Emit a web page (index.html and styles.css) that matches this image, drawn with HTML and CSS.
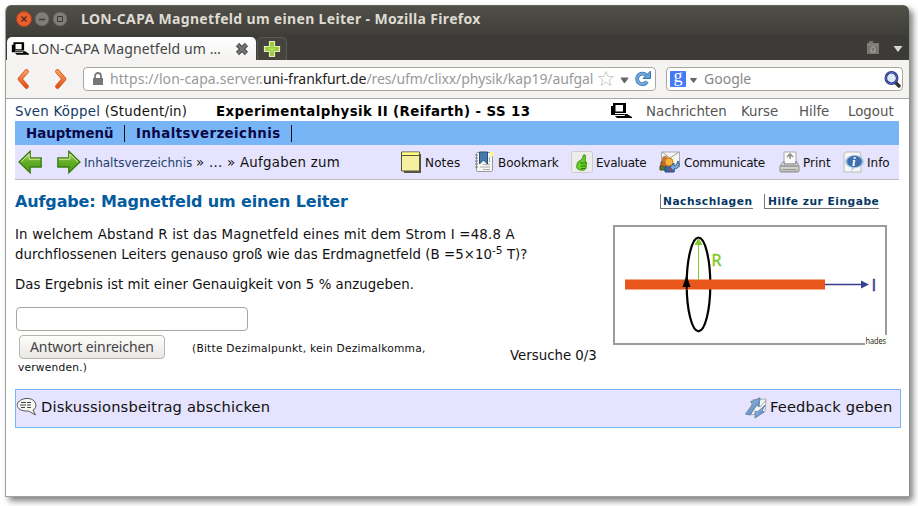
FILE: index.html
```html
<!DOCTYPE html>
<html lang="de">
<head>
<meta charset="utf-8">
<title>LON-CAPA Magnetfeld um einen Leiter</title>
<link rel="stylesheet" href="styles.css">
</head>
<body>
<svg class="defs" width="0" height="0">
  <defs>
    <linearGradient id="orange" x2="0" y2="1"><stop stop-color="#f6a164"/><stop offset="1" stop-color="#e4501b"/></linearGradient>
    <linearGradient id="green" x2="0" y2="1"><stop stop-color="#b5dc62"/><stop offset=".5" stop-color="#62ad27"/><stop offset="1" stop-color="#4b9b12"/></linearGradient>
    <linearGradient id="blue" x2="1" y2="1"><stop stop-color="#bdd5f0"/><stop offset="1" stop-color="#386fae"/></linearGradient>
    <linearGradient id="grey" x2="0" y2="1"><stop stop-color="#fff"/><stop offset="1" stop-color="#b5b7b0"/></linearGradient>
    <symbol id="logo" viewBox="0 0 22 15"><path d="M3 0h13v10H5v1h9v1H1V3h2zM5.500 2v6.500H13V2zM14 11h3l5 3v1H7l-2-2h10z" fill="#000" fill-rule="evenodd"/></symbol>
    <symbol id="arrow" viewBox="0 0 24 24"><path d="M.8 8h11V1.200L23 12 11.800 22.800V17H.8z" fill="url(#green)" stroke="#3c7d15" stroke-width="1.300"/><path d="M1.900 9.200h11V4L21 12" fill="none" stroke="#d5f0a0"/></symbol>
    <symbol id="chevron" viewBox="0 0 12 20"><path d="M2.500 2.500 9 10l-6.500 7.500" fill="none" stroke="#d5541c" stroke-width="4.500" stroke-linecap="round" stroke-linejoin="round"/><path d="M2.500 2.500 9 10l-6.500 7.500" fill="none" stroke="url(#orange)" stroke-width="3" stroke-linecap="round" stroke-linejoin="round"/></symbol>
  </defs>
</svg>
<div class="window">
  <header class="chrome">
    <div class="titlebar">
      <svg class="controls" width="54" height="18" viewBox="0 0 54 18">
        <circle cx="9" cy="9" r="7.500" fill="#e9602f" stroke="#b8421b"/><path d="m6.500 6.500 5 5m0-5-5 5" stroke="#562716" stroke-width="1.300"/>
        <circle cx="27" cy="9" r="7" fill="#807e76" stroke="#5f5d56"/><path d="M24 9.500h6" stroke="#3a3934" stroke-width="1.400"/>
        <circle cx="45" cy="9" r="7" fill="#807e76" stroke="#5f5d56"/><path d="M42.500 6.500h5v5h-5z" fill="none" stroke="#3a3934"/>
      </svg>
      <span class="wintitle">LON-CAPA Magnetfeld um einen Leiter - Mozilla Firefox</span>
    </div>
    <div class="tabs">
      <div class="tab">
        <svg width="18" height="13"><use href="#logo"/></svg>
        <span class="tabtitle">LON-CAPA Magnetfeld um …</span>
        <svg width="14" height="14" viewBox="0 0 14 14"><path d="m2.500 2.500 9 9m0-9-9 9" stroke="#555" stroke-width="4.600"/><path d="m3 3 8 8m0-8-8 8" stroke="#777" stroke-width="2"/></svg>
      </div>
      <div class="newtab"><svg width="18" height="18" viewBox="0 0 18 18"><path d="M6.500 1.500h5v5h5v5h-5v5h-5v-5h-5v-5h5z" fill="#9bca3e" stroke="#e0edb8" stroke-width="1.200"/><path d="M6 9h6M9 6v6" stroke="#b1d95b" stroke-width="2"/></svg></div>
      <svg class="tabtools" width="38" height="16" viewBox="0 0 38 16"><path d="M2 3h2V1h4v2h6v11H2z" fill="#77766f"/><path d="M2 5h12" stroke="#8f8e88"/><path d="M6 12V8.500l2-2 2 2V12z" fill="none" stroke="#aaa9a4"/><path d="M28.500 6h9L33 12z" fill="#d9d8d3"/></svg>
    </div>
    <div class="navbar">
      <svg class="flip" width="12" height="20"><use href="#chevron"/></svg>
      <svg width="12" height="20"><use href="#chevron"/></svg>
      <div class="field url">
        <svg width="12" height="14" viewBox="0 0 12 14"><path d="M3 7V4a3 3 0 0 1 6 0v3" fill="none" stroke="#777" stroke-width="1.800"/><path d="M1 6h10v7H1z" fill="#777"/></svg>
        <span class="address"><span class="a1">https://lon-capa.server.</span><b class="a2">uni-frankfurt.de</b><span class="a3">/res/ufm/clixx/physik/kap19/aufgal</span></span>
        <svg width="54" height="18" viewBox="0 0 54 18"><path d="m8 1.500 2 5h5.500l-4.300 3.500 1.700 5.500L8 12.200l-4.900 3.300L4.800 10 .5 6.500H6z" fill="#fff" stroke="#ccc"/><path d="M23 8h7l-3.500 5z" fill="#666" stroke="#666"/><path d="M49 11.500a5.300 5.300 0 1 1-1-6.500" fill="none" stroke="#3b79b5" stroke-width="3.800"/><path d="M49 11.500a5.300 5.300 0 1 1-1-6.500" fill="none" stroke="#74aadb" stroke-width="2.200"/><path d="M52.500 1v7.500H45z" fill="#62a0d6" stroke="#3b79b5"/></svg>
      </div>
      <div class="field search">
        <span class="g">g</span>
        <svg width="12" height="17" viewBox="16 0 12 17"><path d="M20.500 7.500h6l-3 4z" fill="#666" stroke="#666"/></svg>
        <span class="google">Google</span>
        <svg width="17" height="18" viewBox="0 0 17 18"><path d="m11 12 4 4" stroke="#333" stroke-width="3.400" stroke-linecap="round"/><circle cx="7.500" cy="8" r="5.700" fill="#dfe9f6" stroke="#26338a" stroke-width="2.600"/><circle cx="7.500" cy="8" r="5.700" fill="none" stroke="#7188cf" stroke-width=".7"/></svg>
      </div>
    </div>
  </header>
  <main class="page">
    <div class="userbar">
      <span class="user"><a>Sven Köppel</a> (Student/in)</span>
      <b class="course">Experimentalphysik II (Reifarth) - SS 13</b>
      <svg class="home" width="22" height="15"><use href="#logo"/></svg>
      <span class="top t1">Nachrichten</span><span class="top t2">Kurse</span><span class="top t3">Hilfe</span><span class="top t4">Logout</span>
    </div>
    <nav class="menu"><b class="m1">Hauptmenü</b><b class="m2">Inhaltsverzeichnis</b></nav>
    <div class="tools">
      <svg class="flip" width="24" height="24"><use href="#arrow"/></svg>
      <svg width="24" height="24"><use href="#arrow"/></svg>
      <a class="crumb">Inhaltsverzeichnis</a><span class="path">» ... » Aufgaben zum</span>
      <svg width="22" height="22" viewBox="0 0 22 22"><path d="M2 3h18v19H3z" fill="#55554a"/><path d="M.5 1h18v19H.5z" fill="#f5efa0" stroke="#575432"/><path d="M1 1.500h17V4H1z" fill="#ffff7d"/><path d="M.5 4.500h18" stroke="#575432"/></svg>
      <span class="act c1">Notes</span>
      <svg width="22" height="22" viewBox="0 0 22 22"><rect x="1.500" y="1.500" width="16" height="19" rx="1" fill="#f6f6f4" stroke="#999"/><path d="M0 4h3M0 7h3m-3 3h3m-3 3h3m-3 3h3" stroke="#777"/><path d="M8 13.500h7M5 16h10M8 18.500h7M14.500 6v5" stroke="#aaa"/><path d="M4.500 1h8v12l-4-4-4 4z" fill="#4778ae" stroke="#274e7d"/><path d="M15 1h4v4h-4z" fill="#fff1a0"/></svg>
      <span class="act c2">Bookmark</span>
      <svg width="22" height="22" viewBox="0 0 22 22"><rect x=".5" y=".5" width="21" height="21" rx="2" fill="#ededeb" stroke="#ccc"/><path d="M10 9c3-2 1-6 4-5 1 1 0 4 0 6 2 1 2 3 1 5 1 2-1 5-5 4-4 0-5-3-4-5 0-3 2-4 4-5z" fill="#68cf25" stroke="#348c17"/><path d="M9 12h6m-5 3h5m-5 2.500h4" stroke="#287910"/></svg>
      <span class="act c3">Evaluate</span>
      <svg width="22" height="22" viewBox="0 0 22 22"><path d="M2.500 1h18v15h-18z" fill="#f5f5f2" stroke="#aaa"/><path d="m3 1 8 6 9-6" fill="none" stroke="#999"/><path d="M1 19v-4l3-3 4 1 2 6z" fill="#577b37" stroke="#38541f"/><path d="M2 15v-4l4-3 5 4-1 5z" fill="#b66c25" stroke="#80461b"/><circle cx="6" cy="8" r="3" fill="#c47b36"/><path d="M6 21v-5l4-3 5 3v5z" fill="#3866a5" stroke="#244a80"/><circle cx="10" cy="11" r="4" fill="#f6b442" stroke="#d37a1c"/><path d="m10 15 2 6 2-5" fill="#d83434"/><path d="M19 10c3 4 0 8-4 8v3l-4-5 4-4v3q3 0 4-5z" fill="#7da9da" stroke="#27588f"/></svg>
      <span class="act c4">Communicate</span>
      <svg width="22" height="22" viewBox="0 0 22 22"><path d="M5 1h12v12H5z" fill="#fafafa" stroke="#aaa"/><path d="M11 8V3M8 6l3-3 3 3" fill="none" stroke="#8b9185" stroke-width="1.600"/><path d="m5 10-4 5v5q0 1 2 1h15q2 0 2-1v-5l-3-5v3H5z" fill="url(#grey)" stroke="#888"/><path d="M2 15h17" stroke="#666"/><path d="M4 18.500h13" stroke="#999"/></svg>
      <span class="act c5">Print</span>
      <svg width="22" height="22" viewBox="0 0 22 22"><path d="M3 1h14l1 5v15H1V3z" fill="#f7f7f5" stroke="#bbb"/><path d="m9 15-1 6 6-6z" fill="#bed5ef"/><ellipse cx="11.500" cy="10.500" rx="9.500" ry="6.500" fill="#a8c6e7"/><ellipse cx="11.500" cy="10.500" rx="7.500" ry="5.700" fill="#3f70ae"/><text class="i" x="9" y="15">i</text></svg>
      <span class="act c6">Info</span>
    </div>
    <div class="headline">
      <h1>Aufgabe: Magnetfeld um einen Leiter</h1>
      <b class="help h1b">Nachschlagen</b><b class="help h2b">Hilfe zur Eingabe</b>
    </div>
    <section class="problem">
      <div class="question">
        <p><span class="q1">In welchem Abstand R ist das Magnetfeld eines mit dem Strom I =48.8 A</span><br><span class="q2">durchflossenen Leiters genauso groß wie das Erdmagnetfeld (B =5×10<sup>-5</sup> T)?</span></p>
        <p class="q3">Das Ergebnis ist mit einer Genauigkeit von 5 % anzugeben.</p>
        <div class="input"></div>
        <div class="submit">
          <span class="button">Antwort einreichen</span><small class="s1">(Bitte Dezimalpunkt, kein Dezimalkomma,</small><span class="tries">Versuche 0/3</span>
        </div>
        <small class="s2">verwenden.)</small>
      </div>
      <svg class="figure" width="280" height="126" viewBox="0 0 280 126">
        <path d="M1 1h272v118H1z" fill="#fff" stroke="#9b9b9b" stroke-width="2"/>
        <ellipse cx="85.500" cy="59.500" rx="11.800" ry="46.800" fill="none" stroke="#000" stroke-width="2.200"/>
        <path d="M12 54.500h200v10H12z" fill="#e8561c"/><path d="M73.700 64V54" stroke="#000" stroke-width="2"/><path d="m73.500 50-4 12h8z"/>
        <path d="M85.500 55V18" stroke="#80c72b"/><path d="m85.500 13-4 7h8z" fill="#80c72b"/>
        <path d="M212 59.500h38" stroke="#36408e" stroke-width="1.400"/><path d="m248 55.500 8 4-8 4z" fill="#36408e"/>
        <text class="r" x="98.500" y="41">R</text><text class="cur" x="258.500" y="65.500">I</text>
        <path d="M252 110h23v11h-23z" fill="#fdfff5"/><text class="hades" x="252.500" y="118.500" textLength="20.500" lengthAdjust="spacingAndGlyphs">hades</text>
      </svg>
    </section>
    <footer class="discussion">
      <svg width="22" height="20" viewBox="0 0 22 20"><path d="M10 1.500c11-1 12 10 7 11.500l2.500 5-7-4c-14 1-15-11-2.500-12.500z" fill="#f8f8f3" stroke="#555"/><path d="M5 5.500h5m1 0h4M4 8h6m1 0h4M5 10.500h4m2 0h4" stroke="#444"/></svg>
      <span class="post">Diskussionsbeitrag abschicken</span>
      <svg width="22" height="22" viewBox="0 0 22 22"><path d="m7 3 14-1-1 13-14 3z" fill="#f5f5f1" stroke="#aaa"/><path d="m10 5 5 5 6-7" fill="none" stroke="#aaa"/><path d="m.5 17 8-11-3-1L15 .8 14 10l-2-2-7 10z" fill="url(#blue)" stroke="#527ba5" stroke-width=".8"/><path d="m20 8-3 6 2 1-9 6V14l2 1 4-3z" fill="url(#blue)" stroke="#527ba5" stroke-width=".8"/></svg>
      <span class="feedback">Feedback geben</span>
    </footer>
  </main>
</div>
</body>
</html>
```
FILE: styles.css
```css
* { box-sizing: border-box; }
body { margin: 0; padding: 5px; height: 506px; overflow: hidden; background: #fff; font: 13.333px/20px "DejaVu Sans", sans-serif; color: #111; }
svg { display: block; flex: none; }
span, b, a, small { white-space: nowrap; }
.defs { position: absolute; }
.flip { transform: scaleX(-1); }
.window { width: 904px; height: 492px; background: #fff; border: 1px solid #a3a29d; border-top: 0; border-right: 0; border-radius: 6px 6px 0 0; box-shadow: 4px 4px 6px rgba(0,0,0,.5); overflow: hidden; }
.chrome { height: 94px; background: #f4f3f1; border-bottom: 1px solid #aaa69f; font-family: "Noto Sans", sans-serif; }
.titlebar { display: flex; align-items: center; height: 30px; padding-bottom: 3px; background: linear-gradient(#504f48, #3f3e39); border-top: 1px solid #68665f; }
.controls { margin-left: 9px; }
.wintitle { margin-left: 12px; font-size: 14px; font-weight: 700; color: #dfdbd2; letter-spacing: .33px; }
.tabs { display: flex; align-items: flex-end; height: 25px; background: #3c3b37; }
.tab { display: flex; align-items: center; width: 249px; height: 23px; margin-left: 1px; padding-left: 4px; border-radius: 5px 5px 0 0; background: linear-gradient(#fff, #f4f3f1); }
.tabtitle { width: 206px; padding-left: 2px; font-size: 14px; color: #444; letter-spacing: .12px; }
.newtab { display: flex; align-items: center; justify-content: center; width: 30px; height: 23px; margin-left: 1px; border: 1px solid #5b5a54; border-bottom: 0; border-radius: 5px 5px 0 0; background: #44433e; }
.tabtools { margin: 0 6px 4px auto; }
.navbar { display: flex; align-items: center; height: 38px; padding-left: 11px; }
.navbar > .flip { margin-right: 26px; }
.field { display: flex; align-items: center; height: 24px; border: 1px solid #aaa69e; border-radius: 4px; background: #fff; color: #999; font-size: 14px; }
.url { width: 573px; margin-left: 16px; padding-left: 8px; }
.address { width: 494px; padding-left: 6px; }
.a1 { letter-spacing: .08px; }
.a2 { font-weight: 400; color: #222; letter-spacing: -.05px; }
.a3 { letter-spacing: -.1px; }
.search { width: 237px; margin-left: 10px; padding-left: 3px; }
.google { flex: 1; padding-left: 6px; color: #888; }
.search > svg:last-child { margin-right: 1px; }
.g { width: 16px; height: 16px; border-radius: 1px; background: #4579f5; color: #fff; font: 18px/11px "Liberation Serif", serif; text-align: center; }
.i { font: italic bold 13px "Liberation Serif", serif; fill: #fff; }
.page { padding: 0 9px; }
.userbar { display: grid; grid-template-columns: 201px 394px 36px 95px 58px 49px 52px; align-items: center; height: 22px; padding-top: 2px; }
.userbar > span, .userbar > b { padding-top: 1px; }
.userbar a, .crumb { color: #143a66; }
.home { margin-top: -2px; }
.user { letter-spacing: .26px; }
.course { color: #000; letter-spacing: .41px; }
.top { color: #555; }
.menu { display: flex; align-items: center; width: 884px; height: 24px; background: #78b5f7; color: #0b0847; }
.menu b { height: 17px; line-height: 17px; padding-left: 11px; border-right: 1px solid #111; }
.m1 { width: 110px; }
.m2 { width: 167px; letter-spacing: .43px; }
.tools { display: grid; grid-template-columns: 39px 27px 112px 205px 24px 50px 23px 73px 25px 63px 25px 95px 24px 40px 24px 30px; align-items: center; width: 884px; height: 35px; padding-left: 3px; background: #e5e3fd; border-bottom: 1px solid #bbb9c2; }
.crumb, .act { font-size: 12px; color: #111; }
.crumb { color: #1d426c; padding-top: 1px; }
.path { letter-spacing: .28px; padding-top: 1px; }
.act { padding-top: 2px; }
.c1 { letter-spacing: .15px; }
.c3, .c4 { letter-spacing: -.25px; }
.headline { display: flex; align-items: center; height: 43px; }
h1 { width: 645px; margin: 0; font-size: 16px; color: #045b9e; letter-spacing: -.14px; }
.help { height: 15px; line-height: 15px; padding-left: 2px; border-left: 1px solid #777; border-bottom: 1px solid #777; font-size: 10.667px; color: #063763; letter-spacing: .5px; }
.h1b { width: 93px; margin-right: 11px; }
.h2b { width: 115px; padding-left: 3px; }
.problem { display: flex; height: 166px; }
.question { width: 598px; padding-top: 2px; }
p { margin: 0 0 10px; }
sup { font-size: 10.667px; line-height: 0; }
.q1 { letter-spacing: .19px; }
.q2, .q3 { letter-spacing: .035px; }
.input { width: 232px; height: 24px; margin: 12px 0 4px 1px; border: 1px solid #aaa69e; border-radius: 4px; }
.submit { display: flex; height: 24px; margin-left: 4px; }
.button { width: 146px; height: 24px; padding-left: 10px; border: 1px solid #b7b4ae; border-radius: 4px; background: linear-gradient(#fdfdfc, #e9e8e6); color: #444; font: 14px/21px "Noto Sans", sans-serif; letter-spacing: -.1px; }
small { font-size: 10.667px; }
.s1 { width: 318px; margin-left: 27px; line-height: 28px; letter-spacing: .22px; }
.s2 { display: block; margin-left: 3px; line-height: 18px; letter-spacing: .2px; }
.tries { line-height: 41px; }
.figure { margin-top: 2px; }
.r { font: 16px "Open Sans", sans-serif; fill: #80c72b; stroke: #80c72b; stroke-width: .5px; }
.cur { font: 17px "Open Sans", sans-serif; fill: #36408e; stroke: #36408e; stroke-width: .5px; }
.hades { font: 9.500px "Open Sans", sans-serif; fill: #111; }
.discussion { display: flex; width: 886px; height: 39px; border: 1px solid #78b5f7; background: #e5e3fd; font-size: 14.667px; color: #111; line-height: 34px; }
.discussion > svg { margin-top: 7px; }
.post { width: 707px; padding-left: 3px; letter-spacing: .17px; }
.feedback { padding-left: 3px; letter-spacing: .14px; }
```
